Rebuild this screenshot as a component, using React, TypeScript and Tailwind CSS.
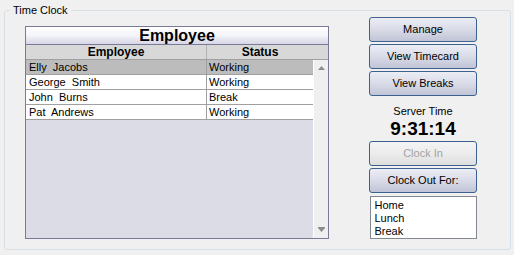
import React from 'react';

const rows = [
  { name: 'Elly  Jacobs', status: 'Working', selected: true },
  { name: 'George  Smith', status: 'Working' },
  { name: 'John  Burns', status: 'Break' },
  { name: 'Pat  Andrews', status: 'Working' },
];

function WinButton({ label, disabled }: { label: string; disabled?: boolean }) {
  return (
    <button
      disabled={disabled}
      className={
        'h-[25px] w-[108px] rounded-[3px] border border-[#3c6190] text-[11px] leading-none ' +
        (disabled
          ? 'bg-gradient-to-b from-[#f4f4f4] via-[#ececec] to-[#dedede] text-[#a3a3a3]'
          : 'bg-gradient-to-b from-[#ecedf5] via-[#d9dbe7] to-[#c0c4d6] text-black')
      }
    >
      {label}
    </button>
  );
}

export default function App() {
  return (
    <div
      className="w-[514px] h-[255px] bg-[#f0f0f0] pt-[4px] px-[4px] text-black"
      style={{ fontFamily: '"Liberation Sans", Arial, sans-serif' }}
    >
      <fieldset className="h-[246px] w-[507px] rounded-[3px] border border-[#d5dfe5]">
        <legend className="ml-[5px] px-[3px] text-[11px] leading-[13px]">Time Clock</legend>
        <div className="flex pl-[20px] pt-[9px]">
          {/* grid */}
          <div className="flex h-[213px] w-[304px] flex-col border border-[#7a7a98]">
            <div className="flex h-[18px] items-center justify-center border-b border-[#7a7a98] bg-gradient-to-b from-white via-[#f4f4fa] to-[#d6d6e6] text-[16px] font-bold leading-none">
              Employee
            </div>
            <div className="flex h-[15px] border-b border-[#a0a0a0] bg-[#d8d8d8] text-[12px] font-bold leading-[15px]">
              <div className="w-[181px] border-r border-[#b0b0b0] text-center">Employee</div>
              <div className="w-[106px] text-center">Status</div>
            </div>
            <div className="flex flex-1">
              <div className="flex w-[287px] flex-col bg-[#dcdce6]">
                {rows.map(r => (
                  <div
                    key={r.name}
                    className={
                      'flex h-[15px] border-b border-[#a0a0a0] text-[11px] leading-[14px] whitespace-pre ' +
                      (r.selected ? 'bg-[#bcbcbc]' : 'bg-white')
                    }
                  >
                    <div className="w-[181px] border-r border-[#a0a0a0] pl-[3px]">{r.name}</div>
                    <div className="w-[106px] pl-[2px]">{r.status}</div>
                  </div>
                ))}
              </div>
              <div className="flex w-[15px] flex-col items-center justify-between border-l border-white bg-[#efefef] py-[6px]">
                <svg width="7" height="4" viewBox="0 0 7 4">
                  <path d="M3.5 0 L7 4 L0 4 Z" fill="#8c8c8c" />
                </svg>
                <svg width="7" height="5" viewBox="0 0 7 5">
                  <rect x="0" y="0" width="7" height="1" fill="#8c8c8c" />
                  <path d="M0 1 L7 1 L3.5 5 Z" fill="#8c8c8c" />
                </svg>
              </div>
            </div>
          </div>

          {/* right column */}
          <div className="ml-[40px] -mt-[9px] flex w-[108px] flex-col items-center">
            <div className="flex flex-col gap-[2px]">
              <WinButton label="Manage" />
              <WinButton label="View Timecard" />
              <WinButton label="View Breaks" />
            </div>
            <div className="mt-[9px] text-[11px] leading-[13px]">Server Time</div>
            <div className="mt-[1px] text-[19px] font-bold leading-[20px]">9:31:14</div>
            <div className="mt-[2px] flex flex-col gap-[2px]">
              <WinButton label="Clock In" disabled />
              <WinButton label="Clock Out For:" />
            </div>
            <div className="mt-[3px] h-[43px] w-[107px] border border-[#828790] bg-white pl-[4px] pt-[2px] text-[11px] leading-[13px]">
              <div>Home</div>
              <div>Lunch</div>
              <div>Break</div>
            </div>
          </div>
        </div>
      </fieldset>
    </div>
  );
}
